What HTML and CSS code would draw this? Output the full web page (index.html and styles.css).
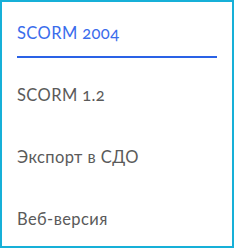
FILE: index.html
```html
<!DOCTYPE html>
<html lang="ru">
<head>
  <meta charset="UTF-8" />
  <meta name="viewport" content="width=device-width, initial-scale=1.0" />
  <title>Экспорт</title>
  <link rel="stylesheet" href="styles.css">
</head>
<body>
  <nav class="export-menu">
    <ul class="export-list">
      <li><a href="#" class="export-item active">SCORM 2004</a></li>
      <li><a href="#" class="export-item">SCORM 1.2</a></li>
      <li><a href="#" class="export-item">Экспорт в СДО</a></li>
      <li><a href="#" class="export-item">Веб-версия</a></li>
    </ul>
  </nav>
</body>
</html>
```

FILE: styles.css
```css
body {
  margin: 0;
  font-family: Lato, "Open Sans", sans-serif;
  background: white;
}

.export-menu {
  box-sizing: border-box;
  width: 234px;
  height: 248px;
  border: 2px solid #17b0d8;
  padding: 10px 15px 0;
}

.export-list {
  list-style: none;
  margin: 0;
  padding: 0;
  display: flex;
  flex-direction: column;
  gap: 16px;
}

.export-item {
  display: block;
  padding: 11px 0 13px;
  border-bottom: 2px solid transparent;
  color: #5a5a5a;
  font-size: 16.5px;
  line-height: 20px;
  letter-spacing: 0.4px;
  font-variant-numeric: oldstyle-nums;
  text-decoration: none;
}

.export-item.active {
  color: #3a6cec;
  border-bottom-color: #2a62e6;
}
```
